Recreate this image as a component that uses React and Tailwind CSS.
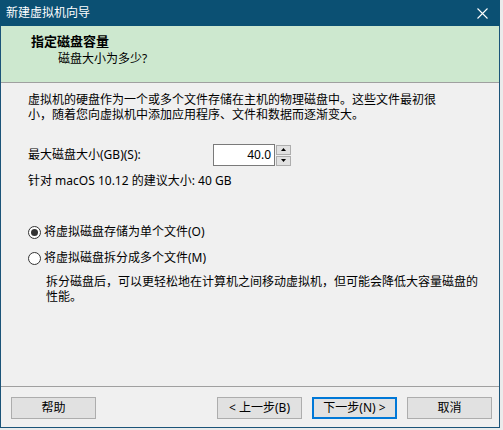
export default function App() {
  return (
    <div className="w-[503px] h-[430px] bg-[#ebebeb] font-[family-name:'Noto_Sans','Noto_Sans_CJK_SC',sans-serif] text-[12px] text-black">
      <div className="w-[500px] h-[428px] flex flex-col bg-[#f0f0f0] border-x border-b border-[#1b5479]">
        {/* title bar */}
        <div className="h-[26px] -mx-px bg-[#0b5073] flex items-center justify-between pl-[6px] pr-[12px] text-white">
          <span className="leading-[16px]">新建虚拟机向导</span>
          <svg width="11" height="11" viewBox="0 0 11 11" className="text-white">
            <path d="M0.5 0.5 L10.5 10.5 M10.5 0.5 L0.5 10.5" stroke="currentColor" strokeWidth="1.1" />
          </svg>
        </div>

        {/* header */}
        <div className="h-[57px] bg-[#cde8cf] border-b border-[#a0a0a0] pt-[7px] pl-[30px]">
          <div className="font-bold text-[13px] leading-[16px]">指定磁盘容量</div>
          <div className="mt-[2px] pl-[27px] leading-[16px]">磁盘大小为多少?</div>
        </div>

        {/* body */}
        <div className="flex-1 flex flex-col pl-[27px] pt-[9px]">
          <p className="leading-[15px]">
            虚拟机的硬盘作为一个或多个文件存储在主机的物理磁盘中。这些文件最初很
            <br />
            小，随着您向虚拟机中添加应用程序、文件和数据而逐渐变大。
          </p>

          <div className="mt-[22px] flex items-center h-[22px]">
            <span className="w-[185px] leading-[16px]">最大磁盘大小(GB)(S):</span>
            <div className="w-[62px] h-[22px] bg-white border border-[#7a7a7a] flex items-center justify-end pr-[3px] leading-[16px]">
              40.0
            </div>
            <div className="ml-px flex flex-col gap-px">
              <div className="w-[15px] h-[10px] bg-[#e1e1e1] border border-[#adadad] flex items-center justify-center">
                <svg width="5" height="3" viewBox="0 0 5 3">
                  <path d="M2.5 0 L5 3 L0 3 Z" fill="#000" />
                </svg>
              </div>
              <div className="w-[15px] h-[10px] bg-[#e1e1e1] border border-[#adadad] flex items-center justify-center">
                <svg width="5" height="3" viewBox="0 0 5 3">
                  <path d="M0 0 L5 0 L2.5 3 Z" fill="#000" />
                </svg>
              </div>
            </div>
          </div>

          <div className="mt-[7px] leading-[15px]">针对 macOS 10.12 的建议大小: 40 GB</div>

          <label className="mt-[36px] flex items-center gap-[3px] leading-[16px]">
            <span className="w-[13px] h-[13px] rounded-full border border-[#333] bg-white flex items-center justify-center">
              <span className="w-[7px] h-[7px] rounded-full bg-[#333]" />
            </span>
            将虚拟磁盘存储为单个文件(O)
          </label>

          <label className="mt-[10px] flex items-center gap-[3px] leading-[16px]">
            <span className="w-[13px] h-[13px] rounded-full border border-[#333] bg-white" />
            将虚拟磁盘拆分成多个文件(M)
          </label>

          <p className="mt-[8px] pl-[18px] leading-[15px]">
            拆分磁盘后，可以更轻松地在计算机之间移动虚拟机，但可能会降低大容量磁盘的
            <br />
            性能。
          </p>
        </div>

        {/* footer */}
        <div className="h-[41px] border-t border-[#a0a0a0] flex items-start pt-[10px] pl-[10px] pr-[7px]">
          <button className="w-[85px] h-[22px] bg-[#e1e1e1] border border-[#adadad] leading-[16px]">帮助</button>
          <div className="ml-auto flex gap-[10px]">
            <button className="w-[85px] h-[22px] bg-[#e1e1e1] border border-[#adadad] leading-[16px]">&lt; 上一步(B)</button>
            <button className="w-[85px] h-[22px] bg-[#e1e1e1] border-2 border-[#0078d7] leading-[16px]">下一步(N) &gt;</button>
            <button className="w-[85px] h-[22px] bg-[#e1e1e1] border border-[#adadad] leading-[16px]">取消</button>
          </div>
        </div>
      </div>
    </div>
  );
}
